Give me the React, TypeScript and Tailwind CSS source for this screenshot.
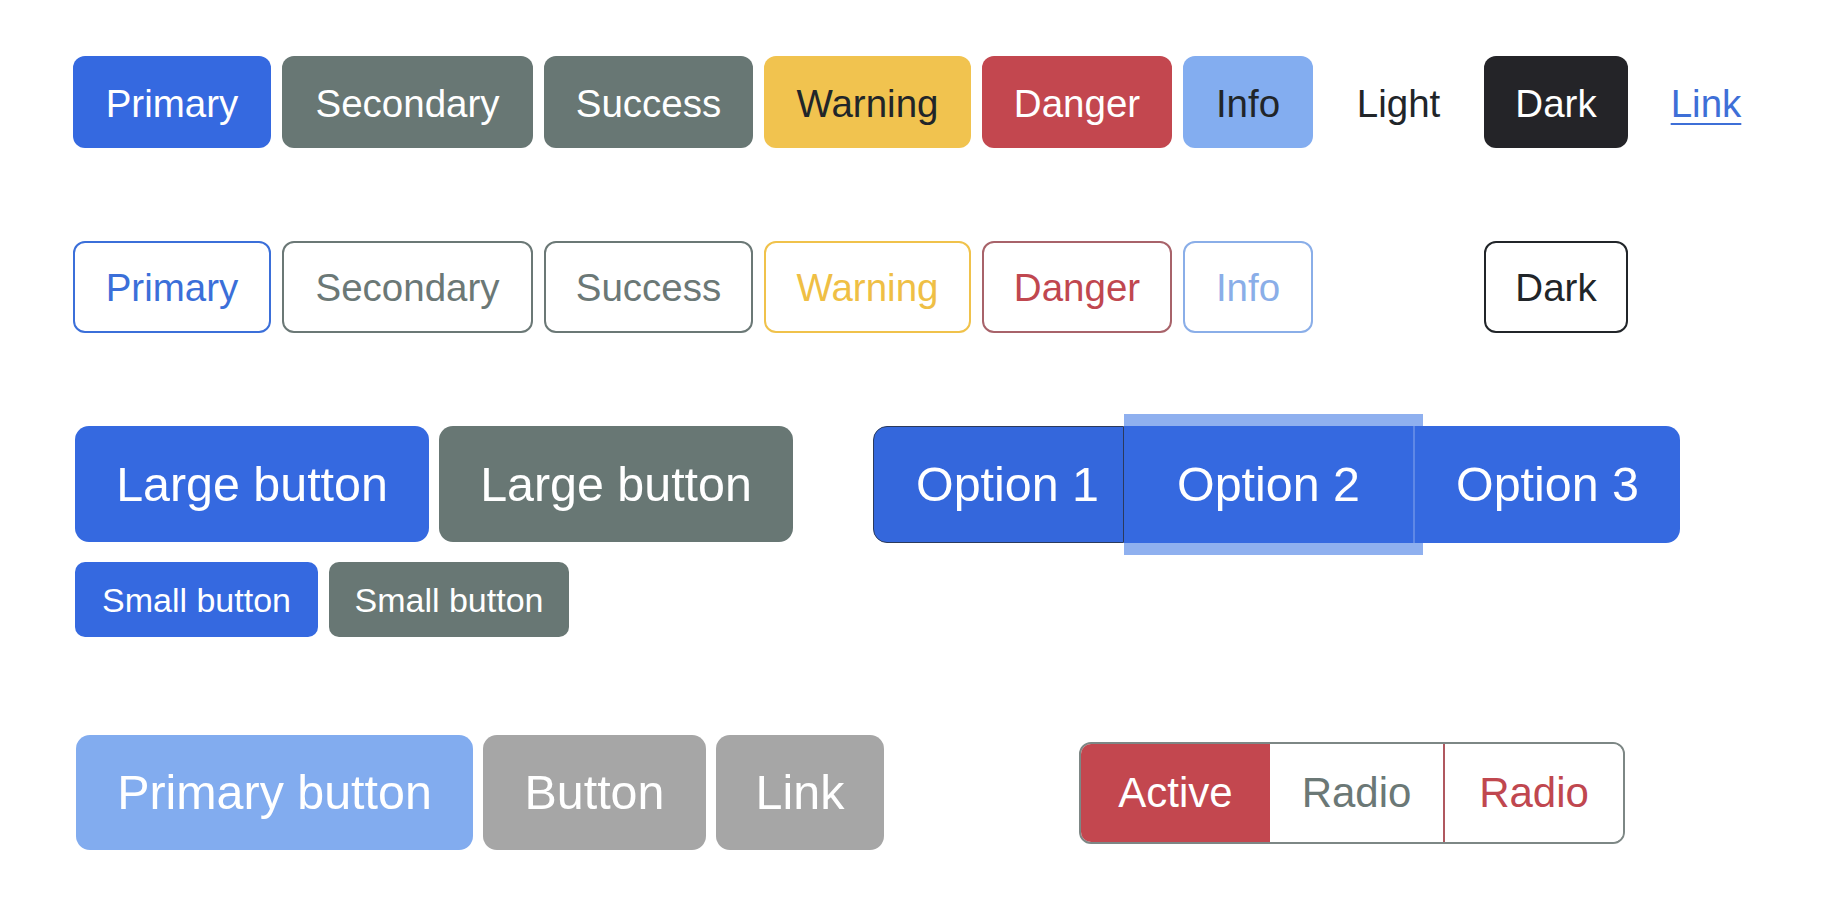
import React from "react";

const F = { fontFamily: '"Liberation Sans", Arial, sans-serif' };

export default function App() {
  return (
    <div className="w-[1842px] h-[906px] bg-white overflow-hidden" style={F}>
      <div className="pt-[56px] pl-[73px] flex flex-col">
        {/* Row 1 solid */}
        <div className="flex gap-[11px] h-[92px] text-[38.5px] leading-none">
          <div className="w-[198px] pt-[5px] rounded-[12px] bg-[#3569e0] text-white flex items-center justify-center">Primary</div>
          <div className="w-[251px] pt-[5px] rounded-[12px] bg-[#687774] text-white flex items-center justify-center">Secondary</div>
          <div className="w-[209px] pt-[5px] rounded-[12px] bg-[#687774] text-white flex items-center justify-center">Success</div>
          <div className="w-[207px] pt-[5px] rounded-[12px] bg-[#f1c34f] text-[#212529] flex items-center justify-center">Warning</div>
          <div className="w-[190px] pt-[5px] rounded-[12px] bg-[#c3474f] text-white flex items-center justify-center">Danger</div>
          <div className="w-[130px] pt-[5px] rounded-[12px] bg-[#83adf0] text-[#212529] flex items-center justify-center">Info</div>
          <div className="w-[149px] pt-[5px] rounded-[12px] bg-white text-[#212529] flex items-center justify-center">Light</div>
          <div className="w-[144px] pt-[5px] rounded-[12px] bg-[#242428] text-white flex items-center justify-center">Dark</div>
          <div className="w-[134px] pt-[5px] rounded-[12px] text-[#3e6fd7] underline underline-offset-[6px] decoration-2 flex items-center justify-center">Link</div>
        </div>

        {/* Row 2 outline */}
        <div className="mt-[93px] flex gap-[11px] h-[92px] text-[38.5px] leading-none">
          <div className="w-[198px] pt-[2px] rounded-[12px] border-2 border-[#3b6fd9] text-[#3b6fd9] flex items-center justify-center">Primary</div>
          <div className="w-[251px] pt-[2px] rounded-[12px] border-2 border-[#6b7876] text-[#6b7876] flex items-center justify-center">Secondary</div>
          <div className="w-[209px] pt-[2px] rounded-[12px] border-2 border-[#6b7876] text-[#6b7876] flex items-center justify-center">Success</div>
          <div className="w-[207px] pt-[2px] rounded-[12px] border-2 border-[#f0c24b] text-[#efbf45] flex items-center justify-center">Warning</div>
          <div className="w-[190px] pt-[2px] rounded-[12px] border-2 border-[#a8636a] text-[#c0474f] flex items-center justify-center">Danger</div>
          <div className="w-[130px] pt-[2px] rounded-[12px] border-2 border-[#8aaee8] text-[#8aaee8] flex items-center justify-center">Info</div>
          <div className="w-[149px] pt-[2px] rounded-[12px] border-2 border-white text-white flex items-center justify-center">Light</div>
          <div className="w-[144px] pt-[2px] rounded-[12px] border-2 border-[#212529] text-[#212529] flex items-center justify-center">Dark</div>
        </div>

        {/* Row 3 sizes + button group */}
        <div className="mt-[93px] ml-[2px] flex items-start">
          <div className="flex flex-col gap-[20px]">
            <div className="flex gap-[10px] h-[116px] text-[48.4px] leading-none">
              <div className="w-[354px] rounded-[14px] bg-[#3569e0] text-white flex items-center justify-center">Large button</div>
              <div className="w-[354px] rounded-[14px] bg-[#687774] text-white flex items-center justify-center">Large button</div>
            </div>
            <div className="flex gap-[11px] h-[75px] text-[34px] leading-none">
              <div className="w-[243px] rounded-[10px] bg-[#3569e0] text-white flex items-center justify-center">Small button</div>
              <div className="w-[240px] rounded-[10px] bg-[#687774] text-white flex items-center justify-center">Small button</div>
            </div>
          </div>
          <div className="ml-[80px] flex h-[117px] text-[48.4px] leading-none">
            <div className="relative z-10 w-[251px] rounded-l-[14px] bg-[#3467dc] border border-[#2b3a5c] text-white flex items-center justify-center pl-[18px]">Option 1</div>
            <div className="w-[289px] bg-[#3569e0] text-white flex items-center justify-center shadow-[0_-12px_0_0_#8fb0ef,0_12px_0_0_#8fb0ef,10px_-12px_0_0_#8fb0ef,10px_12px_0_0_#8fb0ef]">Option 2</div>
            <div className="relative z-10 w-[267px] rounded-r-[14px] bg-[#3569e0] border-l-2 border-[#5f88e6] text-white flex items-center justify-center">Option 3</div>
          </div>
        </div>

        {/* Row 4 disabled + radio group */}
        <div className="mt-[98px] ml-[3px] flex items-center">
          <div className="flex gap-[10px] h-[115px] text-[48.4px] leading-none">
            <div className="w-[397px] rounded-[14px] bg-[#82acef] text-white flex items-center justify-center">Primary button</div>
            <div className="w-[223px] rounded-[14px] bg-[#a6a6a6] text-white flex items-center justify-center">Button</div>
            <div className="w-[168px] rounded-[14px] bg-[#a6a6a6] text-white flex items-center justify-center">Link</div>
          </div>
          <div className="ml-[195px] flex h-[102px] text-[42px] leading-none rounded-[12px] border-2 border-[#7d8785] overflow-hidden">
            <div className="w-[189px] bg-[#c3474f] text-white flex items-center justify-center">Active</div>
            <div className="w-[175px] bg-white text-[#6b7876] border-r-2 border-[#b0585f] flex items-center justify-center">Radio</div>
            <div className="w-[178px] bg-white text-[#c0474f] flex items-center justify-center">Radio</div>
          </div>
        </div>
      </div>
    </div>
  );
}
